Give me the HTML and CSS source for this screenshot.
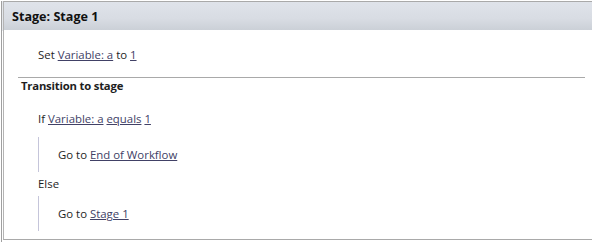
FILE: index.html
```html
<!DOCTYPE html>
<html lang="en">
<head>
    <meta charset="UTF-8">
    <title>Stage: Stage 1</title>
    <link rel="stylesheet" href="styles.css">
</head>
<body>

    <div class="frame">
        <div class="stage">
            <!-- Stage header -->
            <div class="stage-header">Stage: Stage 1</div>

            <div class="stage-body">
                <div class="row action">Set <a href="#">Variable: a</a> to <a href="#">1</a></div>

                <!-- Transition -->
                <div class="transition">
                    <div class="transition-title">Transition to stage</div>

                    <div class="row cond">If <a href="#">Variable: a</a> <a href="#">equals</a> <a href="#">1</a></div>
                    <div class="branch first">
                        <div class="row">Go to <a href="#">End of Workflow</a></div>
                    </div>

                    <div class="row else">Else</div>
                    <div class="branch">
                        <div class="row">Go to <a href="#">Stage 1</a></div>
                    </div>
                </div>
            </div>
        </div>
    </div>

</body>
</html>
```

FILE: styles.css
```css
:root {
    --text-color: #1e1e1e;
    --link-color: #414166;
    --border-color: #a9a9a9;
    --bar-color: #c5c5da;
}

* {
    margin: 0;
    padding: 0;
    box-sizing: border-box;
}

body {
    font-family: 'Open Sans', 'Noto Sans', sans-serif;
    font-size: 11.4px;
    color: var(--text-color);
    background-color: #ffffff;
    padding-left: 1px;
}

.frame {
    height: 242px;
    border-left: 1px solid #a0a0a0;
    padding-left: 1px;
    background: linear-gradient(#e4e7ec 0, #e4e7ec 30px, #ffffff 30px);
}

.stage {
    margin-top: 1px;
    height: 239px;
    border-top: 1px solid var(--border-color);
    border-left: 1px solid #b4b4b4;
    border-bottom: 1px solid var(--border-color);
    background-color: #ffffff;
}

.stage-header {
    height: 28px;
    padding: 2px 0 0 8px;
    line-height: 26px;
    font-size: 12.6px;
    font-weight: 700;
    color: #111111;
    background: linear-gradient(#dfe3ea, #d8dce3 60%, #cbd0d7);
}

.stage-body {
    padding-top: 17px;
}

.row {
    line-height: 16px;
    white-space: nowrap;
}

.row a {
    color: var(--link-color);
    text-decoration: underline;
}

.action {
    padding-left: 34px;
}

.transition {
    margin: 14px 7px 0 14px;
    border-top: 1px solid var(--border-color);
}

.transition-title {
    padding-left: 3px;
    line-height: 16px;
    font-size: 11.3px;
    font-weight: 700;
    letter-spacing: -0.2px;
}

.cond,
.else {
    padding-left: 20px;
}

.cond {
    margin-top: 17px;
}

.branch {
    margin-left: 20px;
    border-left: 1px solid var(--bar-color);
    padding: 10px 0 9px 19px;
}

.branch.first {
    margin-top: 10px;
}

.else {
    margin: 4px 0;
}
```
